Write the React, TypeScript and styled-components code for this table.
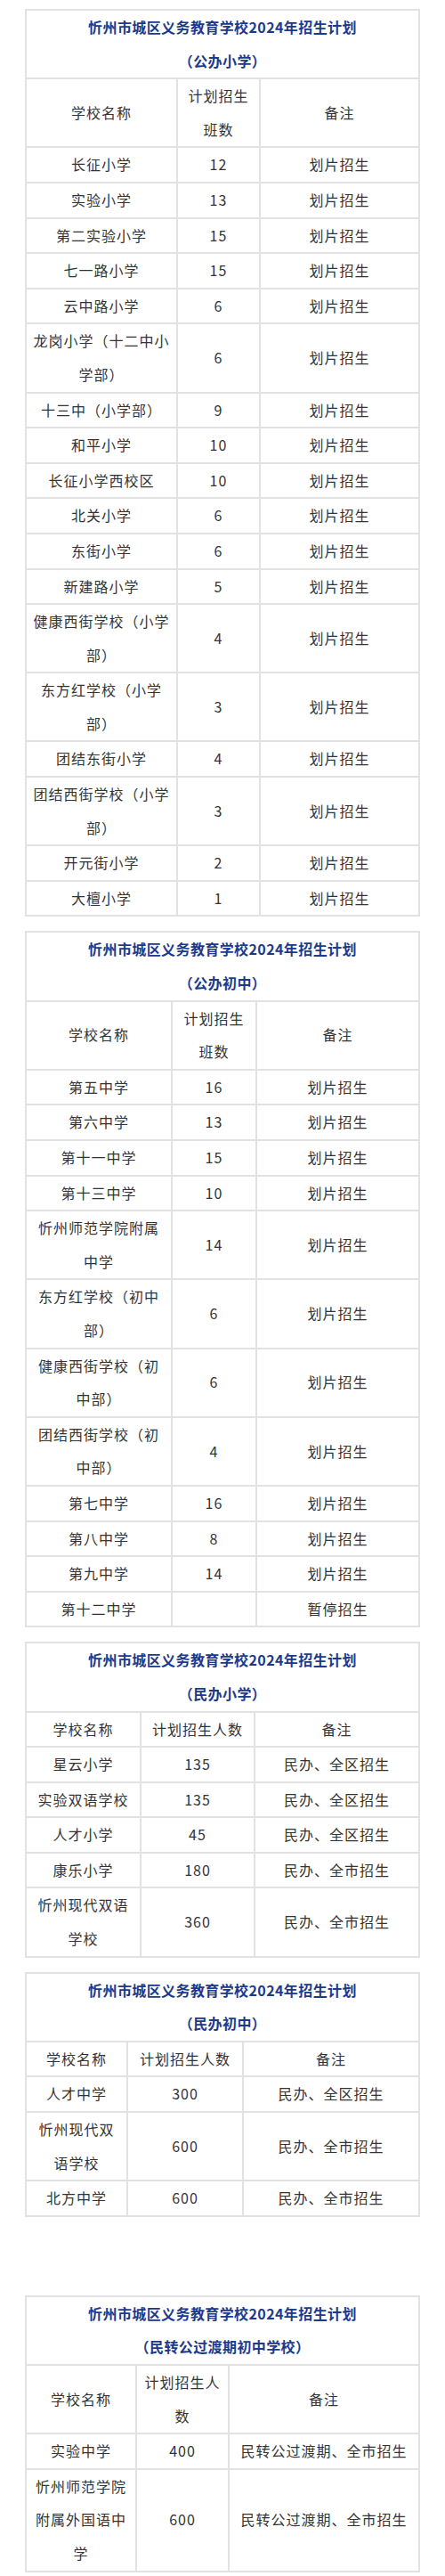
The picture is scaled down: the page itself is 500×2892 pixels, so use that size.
import styled, { createGlobalStyle } from "styled-components"

const GlobalStyle = createGlobalStyle`
  html, body {
    margin: 0;
    padding: 0;
    background: #fff;
  }
  body {
    font-family: "Noto Sans CJK SC", "Noto Sans", sans-serif;
    color: #333;
  }
`

type Row = [string, string, string]

interface Plan {
  subtitle: string
  cols: number[]
  header: Row
  rows: Row[]
  gapBefore: number
}

const TITLE = "忻州市城区义务教育学校2024年招生计划"

const plans: Plan[] = [
  {
    subtitle: "（公办小学）",
    cols: [170, 93, 179],
    header: ["学校名称", "计划招生班数", "备注"],
    gapBefore: 10,
    rows: [
      ["长征小学", "12", "划片招生"],
      ["实验小学", "13", "划片招生"],
      ["第二实验小学", "15", "划片招生"],
      ["七一路小学", "15", "划片招生"],
      ["云中路小学", "6", "划片招生"],
      ["龙岗小学（十二中小学部）", "6", "划片招生"],
      ["十三中（小学部）", "9", "划片招生"],
      ["和平小学", "10", "划片招生"],
      ["长征小学西校区", "10", "划片招生"],
      ["北关小学", "6", "划片招生"],
      ["东街小学", "6", "划片招生"],
      ["新建路小学", "5", "划片招生"],
      ["健康西街学校（小学部）", "4", "划片招生"],
      ["东方红学校（小学部）", "3", "划片招生"],
      ["团结东街小学", "4", "划片招生"],
      ["团结西街学校（小学部）", "3", "划片招生"],
      ["开元街小学", "2", "划片招生"],
      ["大檀小学", "1", "划片招生"],
    ],
  },
  {
    subtitle: "（公办初中）",
    cols: [164, 95, 183],
    header: ["学校名称", "计划招生班数", "备注"],
    gapBefore: 16,
    rows: [
      ["第五中学", "16", "划片招生"],
      ["第六中学", "13", "划片招生"],
      ["第十一中学", "15", "划片招生"],
      ["第十三中学", "10", "划片招生"],
      ["忻州师范学院附属中学", "14", "划片招生"],
      ["东方红学校（初中部）", "6", "划片招生"],
      ["健康西街学校（初中部）", "6", "划片招生"],
      ["团结西街学校（初中部）", "4", "划片招生"],
      ["第七中学", "16", "划片招生"],
      ["第八中学", "8", "划片招生"],
      ["第九中学", "14", "划片招生"],
      ["第十二中学", "", "暂停招生"],
    ],
  },
  {
    subtitle: "（民办小学）",
    cols: [129, 128, 185],
    header: ["学校名称", "计划招生人数", "备注"],
    gapBefore: 16,
    rows: [
      ["星云小学", "135", "民办、全区招生"],
      ["实验双语学校", "135", "民办、全区招生"],
      ["人才小学", "45", "民办、全区招生"],
      ["康乐小学", "180", "民办、全市招生"],
      ["忻州现代双语学校", "360", "民办、全市招生"],
    ],
  },
  {
    subtitle: "（民办初中）",
    cols: [114, 130, 198],
    header: ["学校名称", "计划招生人数", "备注"],
    gapBefore: 16,
    rows: [
      ["人才中学", "300", "民办、全区招生"],
      ["忻州现代双语学校", "600", "民办、全市招生"],
      ["北方中学", "600", "民办、全市招生"],
    ],
  },
  {
    subtitle: "（民转公过渡期初中学校）",
    cols: [124, 104, 214],
    header: ["学校名称", "计划招生人数", "备注"],
    gapBefore: 88,
    rows: [
      ["实验中学", "400", "民转公过渡期、全市招生"],
      ["忻州师范学院附属外国语中学", "600", "民转公过渡期、全市招生"],
    ],
  },
]

function PlanTable({ plan }: { plan: Plan }) {
  return (
    <Table $gap={plan.gapBefore}>
      <colgroup>
        {plan.cols.map((w, i) => (
          <Col key={i} $w={w} />
        ))}
      </colgroup>
      <tbody>
        <tr>
          <TitleCell colSpan={3}>
            {TITLE}
            <br />
            {plan.subtitle}
          </TitleCell>
        </tr>
        <tr>
          {plan.header.map((h, i) => (
            <Cell key={i}>{h}</Cell>
          ))}
        </tr>
        {plan.rows.map((row) => (
          <tr key={row[0]}>
            {row.map((c, i) => (
              <Cell key={i}>{c}</Cell>
            ))}
          </tr>
        ))}
      </tbody>
    </Table>
  )
}

export default function App() {
  return (
    <>
      <GlobalStyle />
      <Page>
        {plans.map((plan) => (
          <PlanTable key={plan.subtitle} plan={plan} />
        ))}
      </Page>
    </>
  )
}

// style

const Page = styled.div`
  display: flex;
  flex-direction: column;
  align-items: center;
  padding-bottom: 12px;
`
const Table = styled.table<{ $gap: number }>`
  width: 442px;
  margin-top: ${(p) => p.$gap}px;
  table-layout: fixed;
  border-collapse: collapse;
  border: 2px solid #e2e2e2;
`
const Col = styled.col<{ $w: number }>`
  width: ${(p) => p.$w}px;
`
const Cell = styled.td`
  padding: 0 7px;
  border: 2px solid #e2e2e2;
  text-align: center;
  vertical-align: middle;
  font-size: 16px;
  line-height: 37.6px;
  letter-spacing: 1px;
  color: #333;
  word-break: break-all;
`
const TitleCell = styled.td`
  padding: 0 4px;
  border: 2px solid #e2e2e2;
  text-align: center;
  font-size: 16px;
  font-weight: bold;
  line-height: 37.6px;
  letter-spacing: 0.4px;
  color: #1c3a8c;
`
